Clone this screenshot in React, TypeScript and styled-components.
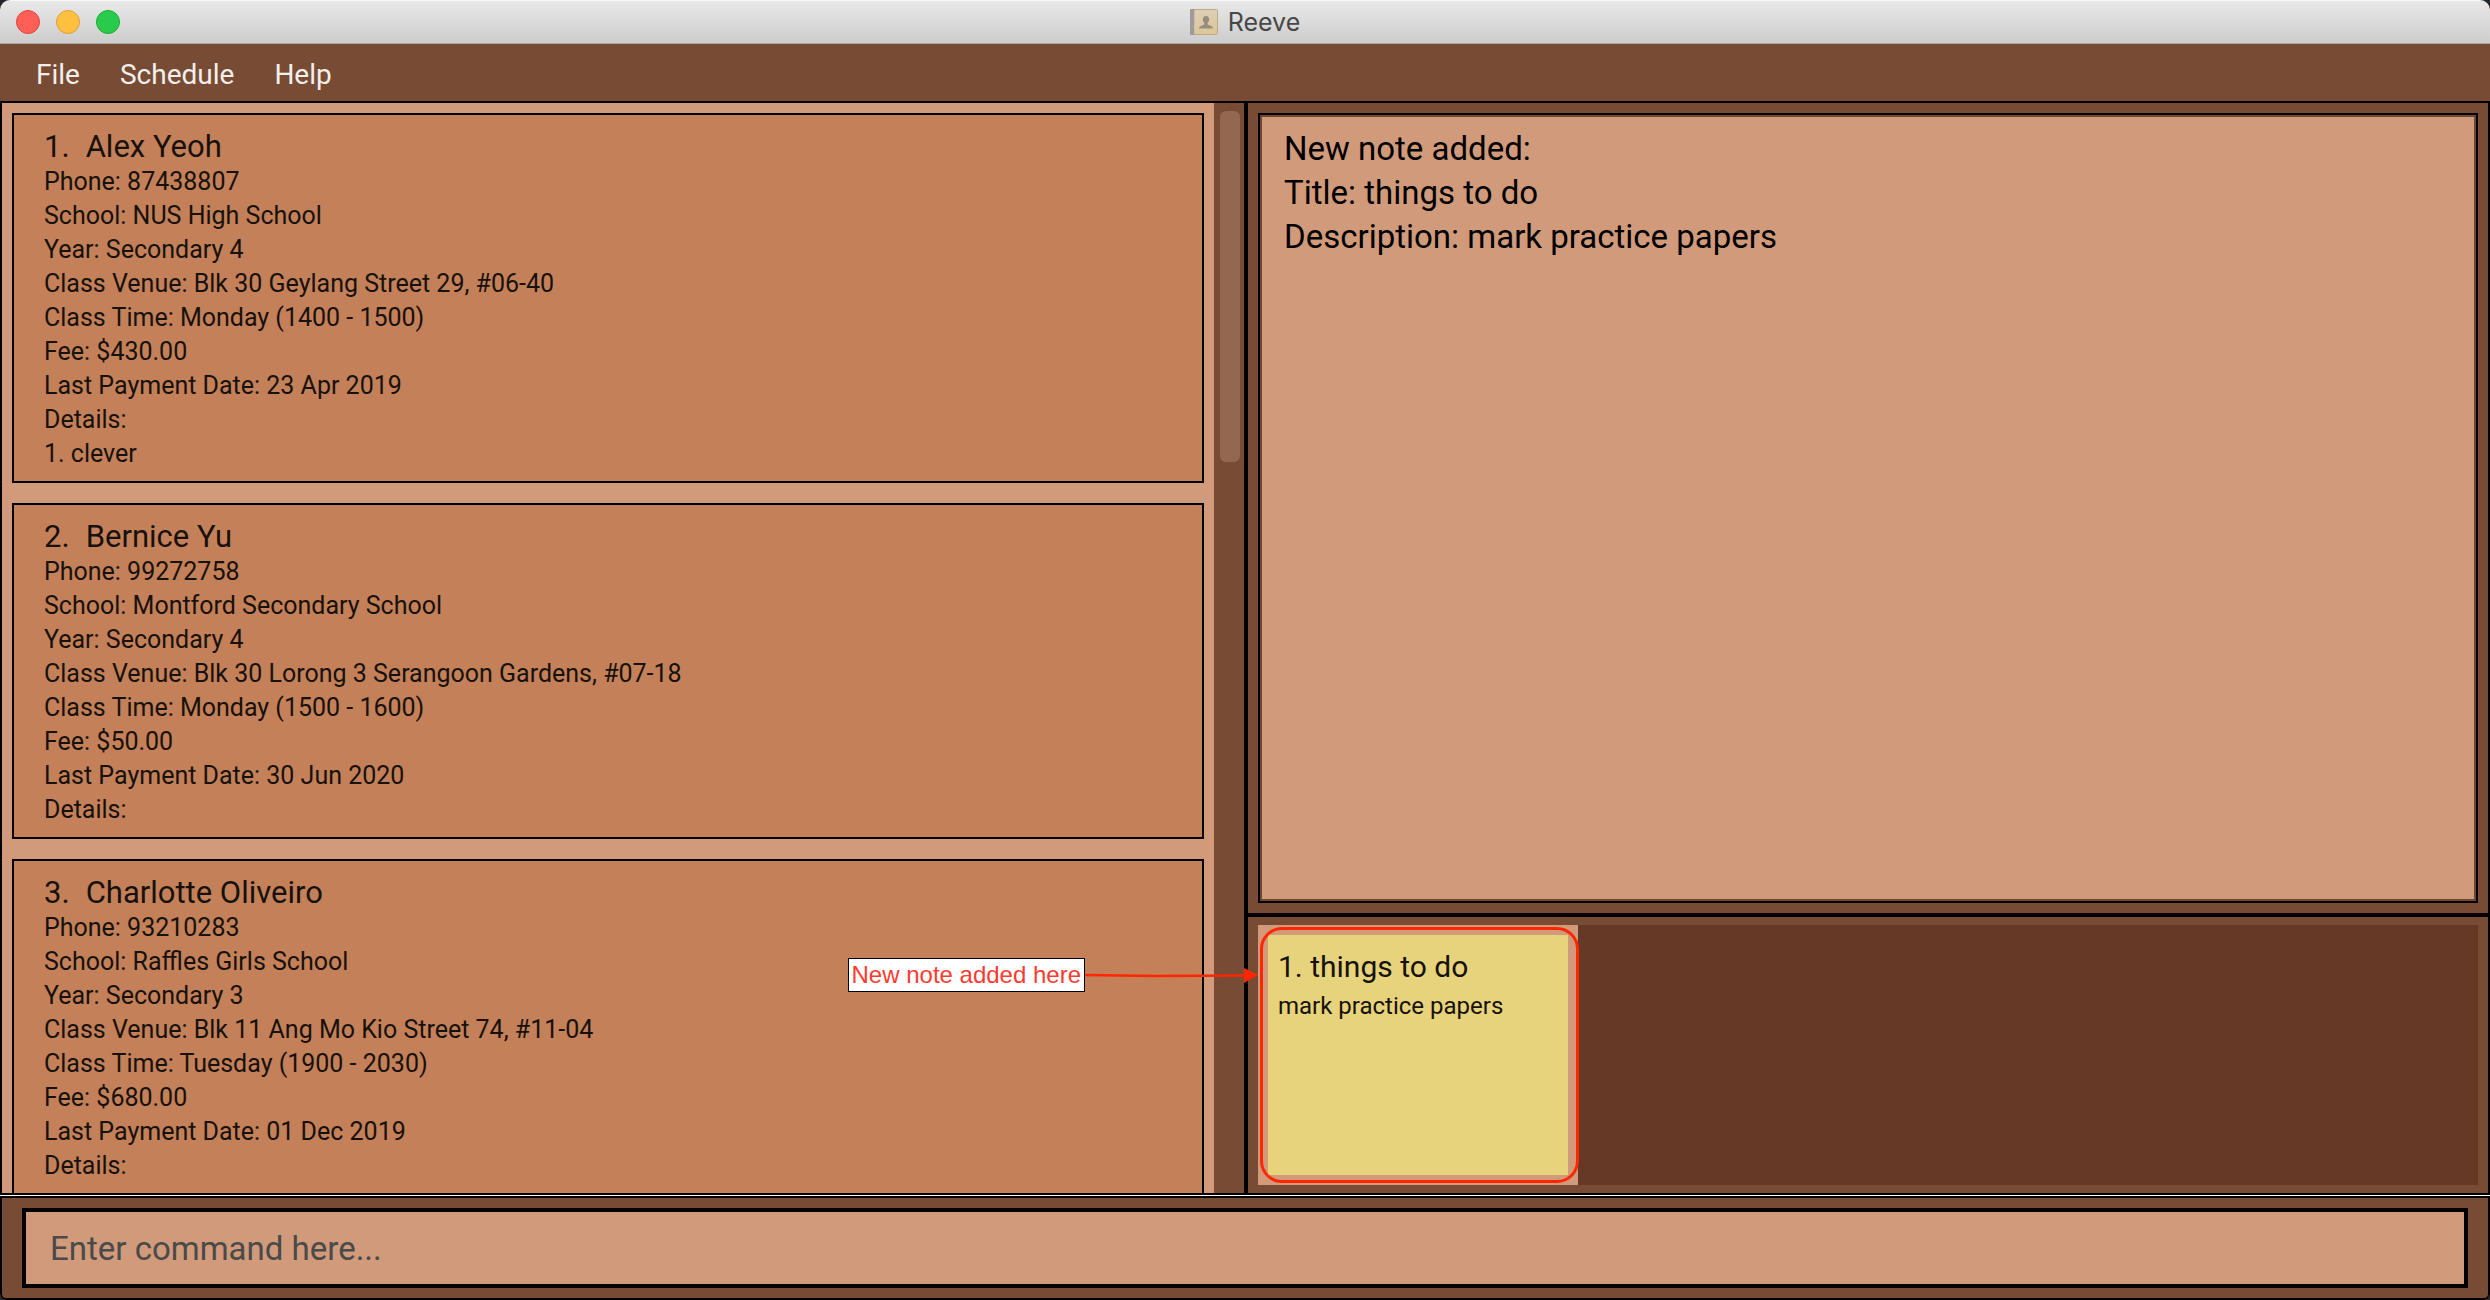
import React from 'react';
import styled, { createGlobalStyle } from 'styled-components';

const color = {
  bar: '#784b34',
  paper: '#d19a7a',
  card: '#c48058',
  well: '#653925',
  note: '#e7d37b',
  inset: '#6e4731',
  thumb: '#936850',
  ink: '#17110c',
  mark: '#ff2600',
};

const GlobalStyle = createGlobalStyle`
  *, *::before, *::after { box-sizing: border-box; }
  body { margin: 0; background: #23272b; font-family: Roboto, "Liberation Sans", sans-serif; color: ${color.ink}; }
  button, input, textarea { font: inherit; color: inherit; margin: 0; }
  h1, h2, p, ul, ol { margin: 0; padding: 0; font-weight: 400; list-style: none; }
`;

const Window = styled.div`
  display: flex;
  flex-direction: column;
  height: 100vh;
  border-radius: 10px 10px 6px 6px;
  overflow: hidden;
  background: ${color.bar};
`;

const TitleBar = styled.header`
  flex: none;
  display: grid;
  grid-template-columns: 1fr auto 1fr;
  align-items: center;
  height: 44px;
  padding: 0 16px;
  background: linear-gradient(#e8e8e8, #cdcdcd);
  border-top: 1px solid #f6f6f6;
  border-bottom: 1px solid #a9a9a9;
`;

const Lights = styled.div`
  display: flex;
  gap: 16px;
`;

const Light = styled.button<{ $fill: string; $edge: string }>`
  width: 24px;
  height: 24px;
  padding: 0;
  border-radius: 50%;
  background: ${p => p.$fill};
  border: 1px solid ${p => p.$edge};
`;

const WindowTitle = styled.h1`
  display: flex;
  align-items: center;
  gap: 10px;
  font: 25px/30px Inter, sans-serif;
  color: #474747;
`;

const MenuBar = styled.nav`
  flex: none;
  display: flex;
  height: 57px;
  padding: 4px 16px 0;
`;

const MenuButton = styled.button`
  padding: 0 20px;
  border: 0;
  background: none;
  font-size: 28px;
  line-height: 36px;
  color: #f3efec;
`;

const Workspace = styled.main`
  flex: 1;
  min-height: 0;
  display: flex;
  border: 2px solid #000;
`;

const ListPane = styled.section`
  flex: none;
  width: calc(50% + 3px);
  display: flex;
  border-right: 4px solid #000;
`;

const StudentList = styled.ol`
  flex: 1;
  min-width: 0;
  display: flex;
  flex-direction: column;
  gap: 20px;
  padding: 10px;
  overflow: hidden;
  background: ${color.paper};
`;

const Card = styled.li`
  flex: none;
  padding: 14px 30px 10px;
  border: 2px solid #000;
  background: ${color.card};
`;

const Heading = styled.h2`
  display: flex;
  gap: 16px;
  font-size: 31px;
  line-height: 36px;
`;

const Row = styled.p`
  font-size: 25px;
  line-height: 34px;
`;

const ScrollTrack = styled.div`
  flex: none;
  width: 30px;
  padding: 8px 4px 8px 6px;
`;

const ScrollThumb = styled.div`
  height: 351px;
  border-radius: 6px;
  background: ${color.thumb};
`;

const SidePane = styled.section`
  flex: 1;
  min-width: 0;
  display: flex;
  flex-direction: column;
`;

const ResultPane = styled.div`
  flex: 1;
  display: flex;
  padding: 10px;
  border-bottom: 4px solid #000;
`;

const ResultBox = styled.textarea`
  flex: 1;
  resize: none;
  padding: 12px 24px;
  border: 2px solid #000;
  border-radius: 0;
  outline: none;
  box-shadow: inset 0 0 0 2px ${color.inset};
  background: ${color.paper};
  font-size: 33px;
  line-height: 44px;
  color: #000;
`;

const NotesPane = styled.div`
  padding: 8px 10px;
`;

const NotesWell = styled.ul`
  display: flex;
  background: ${color.well};
`;

const NoteCell = styled.li`
  position: relative;
  width: 320px;
  height: 260px;
  padding: 10px;
  background: ${color.paper};
`;

const Note = styled.article`
  height: 100%;
  padding: 14px 10px;
  background: ${color.note};
`;

const NoteTitle = styled.h2`
  font-size: 30px;
  line-height: 36px;
  padding-bottom: 4px;
`;

const NoteText = styled.p`
  font-size: 24px;
  line-height: 34px;
`;

const Highlight = styled.div`
  position: absolute;
  inset: 2px -1px 2px 2px;
  border: 3px solid ${color.mark};
  border-radius: 22px;
`;

const Callout = styled.div`
  position: absolute;
  top: 33px;
  right: 100%;
  display: flex;
  align-items: center;
`;

const CalloutLabel = styled.span`
  padding: 1px 3px;
  border: 1px solid #000;
  background: #fff;
  font: 24px/30px "Liberation Sans", Arial, sans-serif;
  white-space: nowrap;
  color: #ff3a30;
`;

const CommandBar = styled.form`
  flex: none;
  display: flex;
  padding: 10px 20px;
  border: 2px solid #000;
  border-radius: 0 0 6px 6px;
  box-shadow: 0 -1px 0 #fff;
  margin-top: 1px;
`;

const CommandInput = styled.input`
  flex: 1;
  min-width: 0;
  height: 80px;
  padding: 0 24px;
  border: 4px solid #000;
  border-radius: 0;
  outline: none;
  background: ${color.paper};
  font-size: 33px;
  &::placeholder { color: #4a4a4a; opacity: 1; }
`;

const students = [
  {
    name: 'Alex Yeoh',
    rows: ['Phone: 87438807', 'School: NUS High School', 'Year: Secondary 4', 'Class Venue: Blk 30 Geylang Street 29, #06-40',
      'Class Time: Monday (1400 - 1500)', 'Fee: $430.00', 'Last Payment Date: 23 Apr 2019', 'Details:', '1. clever'],
  },
  {
    name: 'Bernice Yu',
    rows: ['Phone: 99272758', 'School: Montford Secondary School', 'Year: Secondary 4', 'Class Venue: Blk 30 Lorong 3 Serangoon Gardens, #07-18',
      'Class Time: Monday (1500 - 1600)', 'Fee: $50.00', 'Last Payment Date: 30 Jun 2020', 'Details:'],
  },
  {
    name: 'Charlotte Oliveiro',
    rows: ['Phone: 93210283', 'School: Raffles Girls School', 'Year: Secondary 3', 'Class Venue: Blk 11 Ang Mo Kio Street 74, #11-04',
      'Class Time: Tuesday (1900 - 2030)', 'Fee: $680.00', 'Last Payment Date: 01 Dec 2019', 'Details:'],
  },
];

const BookIcon = () => (
  <svg width="28" height="26" viewBox="0 0 28 26" aria-hidden="true">
    <defs>
      <linearGradient id="cover" x1="0" y1="0" x2="0" y2="1">
        <stop offset="0" stopColor="#ddd0b8" />
        <stop offset="1" stopColor="#dcc597" />
      </linearGradient>
    </defs>
    <rect x="0.5" y="0.5" width="27" height="25" rx="1" fill="url(#cover)" stroke="#c0aa80" />
    <rect x="0" y="0" width="5" height="26" rx="1" fill="#a39a97" />
    <rect x="4" y="1" width="1" height="24" fill="#c6bfba" />
    <path d="M16 7c2 0 3.200 1.500 3.200 3.600 0 1.600-.7 2.800-1.500 3.400v1.200c.6 1.200 5.300 1.300 5.300 4.300H9c0-3 4.700-3.100 5.300-4.300V14c-.8-.6-1.500-1.800-1.500-3.400C12.800 8.500 14 7 16 7z" fill="#978d7f" />
  </svg>
);

const Arrow = () => (
  <svg width="173" height="34" viewBox="0 0 173 34" aria-hidden="true">
    <path d="M0 17L70 18L162 17.500" fill="none" stroke={color.mark} strokeWidth="2.500" />
    <path d="M159 10L173 17L159 25z" fill={color.mark} />
  </svg>
);

export default function App() {
  return (
    <>
      <GlobalStyle />
      <Window>
        <TitleBar>
          <Lights>
            <Light aria-label="Close" $fill="#ff5f57" $edge="#e2463f" />
            <Light aria-label="Minimise" $fill="#ffbf3f" $edge="#dfa032" />
            <Light aria-label="Zoom" $fill="#28cb4c" $edge="#1dad2d" />
          </Lights>
          <WindowTitle><BookIcon />Reeve</WindowTitle>
        </TitleBar>
        <MenuBar>
          <MenuButton>File</MenuButton>
          <MenuButton>Schedule</MenuButton>
          <MenuButton>Help</MenuButton>
        </MenuBar>
        <Workspace>
          <ListPane>
            <StudentList>
              {students.map((student, i) => (
                <Card key={student.name}>
                  <Heading><span>{i + 1}.</span><span>{student.name}</span></Heading>
                  {student.rows.map(row => <Row key={row}>{row}</Row>)}
                </Card>
              ))}
            </StudentList>
            <ScrollTrack><ScrollThumb /></ScrollTrack>
          </ListPane>
          <SidePane>
            <ResultPane>
              <ResultBox
                readOnly
                aria-label="Result"
                value={'New note added:\nTitle: things to do\nDescription: mark practice papers'}
              />
            </ResultPane>
            <NotesPane>
              <NotesWell>
                <NoteCell>
                  <Note>
                    <NoteTitle>1. things to do</NoteTitle>
                    <NoteText>mark practice papers</NoteText>
                  </Note>
                  <Highlight />
                  <Callout><CalloutLabel>New note added here</CalloutLabel><Arrow /></Callout>
                </NoteCell>
              </NotesWell>
            </NotesPane>
          </SidePane>
        </Workspace>
        <CommandBar>
          <CommandInput aria-label="Command" placeholder="Enter command here..." />
        </CommandBar>
      </Window>
    </>
  );
}
